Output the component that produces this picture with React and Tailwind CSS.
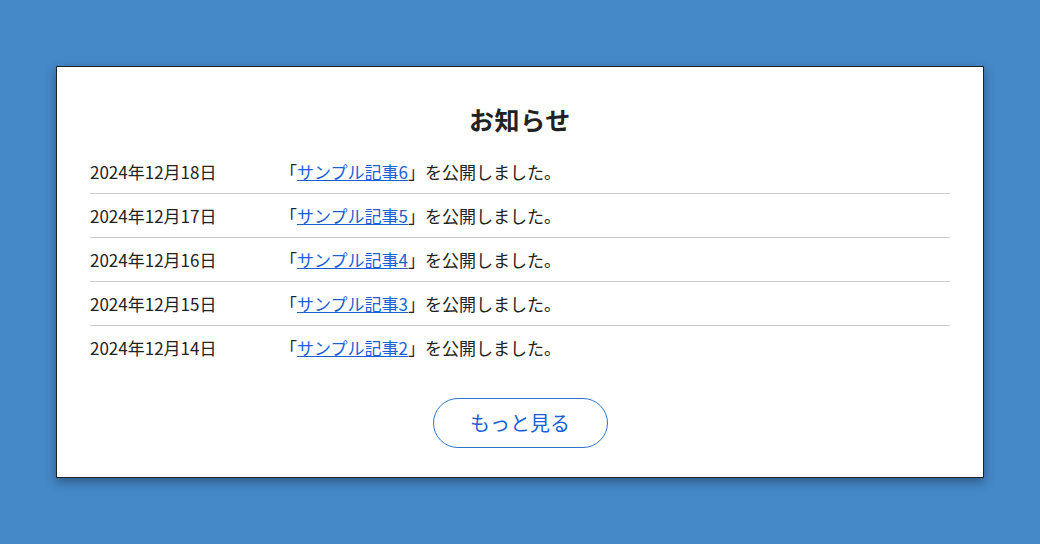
import React from "react";

const news = [
  { date: "2024年12月18日", title: "サンプル記事6" },
  { date: "2024年12月17日", title: "サンプル記事5" },
  { date: "2024年12月16日", title: "サンプル記事4" },
  { date: "2024年12月15日", title: "サンプル記事3" },
  { date: "2024年12月14日", title: "サンプル記事2" },
];

export default function App() {
  return (
    <div
      className="w-[1040px] h-[544px] bg-[#4589c9] pt-[66px] pl-[56px]"
      style={{ fontFamily: '"Noto Sans CJK JP", "Noto Sans", sans-serif' }}
    >
      <div className="w-[928px] h-[412px] bg-white border border-[#222] shadow-[0_4px_10px_rgba(0,0,0,0.35)] px-[33px] pt-[34px]">
        <h2 className="text-center text-[25px] font-bold text-[#222] leading-[36px] tracking-wide">お知らせ</h2>
        <ul className="mt-[13px]">
          {news.map((n, i) => (
            <li
              key={i}
              className={`flex items-center h-[44px] text-[17px] text-[#222] ${i < news.length - 1 ? "border-b border-[#ccc]" : ""}`}
            >
              <span className="w-[190px] shrink-0">{n.date}</span>
              <span>
                「<a href="#" className="text-[#1a5fd6] underline">{n.title}</a>」を公開しました。
              </span>
            </li>
          ))}
        </ul>
        <div className="flex justify-center mt-[28px]">
          <button className="w-[175px] h-[50px] rounded-full border border-[#2f74d0] text-[#1a5fd6] text-[20px] bg-white">
            もっと見る
          </button>
        </div>
      </div>
    </div>
  );
}
